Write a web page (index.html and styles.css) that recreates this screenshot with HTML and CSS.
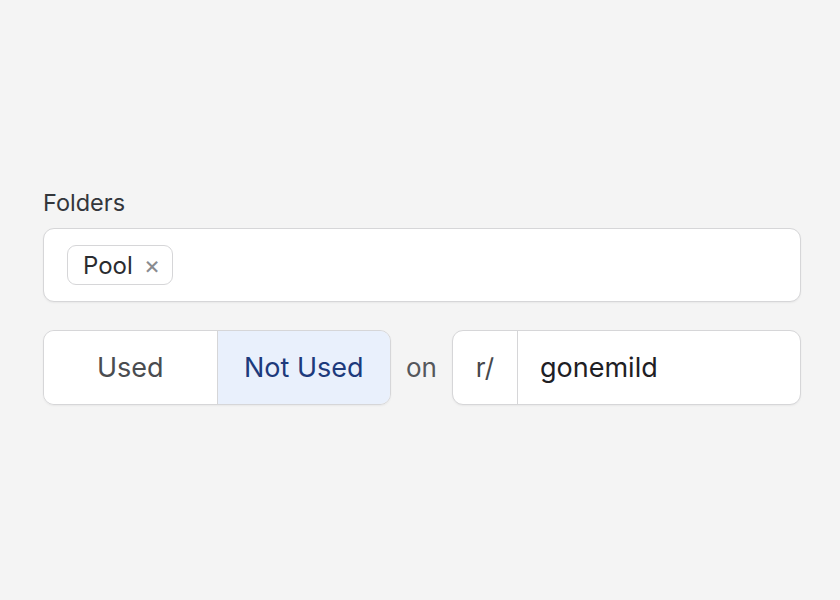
FILE: index.html
```html
<!DOCTYPE html>
<html lang="en">
<head>
<meta charset="utf-8">
<title>Folders</title>
<link rel="stylesheet" href="styles.css">
</head>
<body>
<main class="panel">
  <label class="label">Folders</label>
  <div class="tagbox">
    <span class="tag">Pool <span class="tag-x">×</span></span>
  </div>
  <div class="row">
    <div class="toggle">
      <button class="seg">Used</button>
      <button class="seg seg-active">Not Used</button>
    </div>
    <span class="on">on</span>
    <div class="field">
      <span class="prefix">r/</span>
      <span class="value">gonemild</span>
    </div>
  </div>
</main>
</body>
</html>
```
FILE: styles.css
```css
* { box-sizing: border-box; }
html, body { margin: 0; padding: 0; background: #f4f4f4; }
body {
  font-family: Inter, "Noto Sans", sans-serif;
  width: 840px;
  height: 600px;
}
.panel {
  width: 758px;
  margin-left: 43px;
  padding-top: 188px;
  display: flex;
  flex-direction: column;
}
.label {
  font-size: 23.5px;
  line-height: 30px;
  color: #33363b;
  margin-bottom: 10px;
}
.tagbox {
  height: 74px;
  background: #fff;
  border: 1.5px solid #d6d6d8;
  border-radius: 11px;
  box-shadow: 0 1px 2px rgba(0,0,0,0.05);
  display: flex;
  align-items: center;
  padding-left: 23px;
}
.tag {
  display: inline-flex;
  align-items: center;
  height: 40px;
  padding: 0 12px 0 15px;
  border: 1.5px solid #d6d6d8;
  border-radius: 9px;
  font-size: 24px;
  color: #2a2c30;
}
.tag-x {
  margin-left: 11px;
  color: #8a8c90;
  font-size: 25px;
  line-height: 1;
}
.row {
  margin-top: 28px;
  display: flex;
  align-items: center;
  height: 75px;
}
.toggle {
  display: flex;
  width: 348px;
  height: 75px;
  border: 1.5px solid #d6d6d8;
  border-radius: 11px;
  overflow: hidden;
  box-shadow: 0 1px 2px rgba(0,0,0,0.05);
}
.seg {
  flex: 1;
  border: 0;
  margin: 0;
  background: #fff;
  font-family: inherit;
  font-size: 27px;
  color: #4a4c50;
}
.seg-active {
  background: #e9f0fc;
  color: #1d3a7c;
  border-left: 1.5px solid #d6d6d8;
}
.on {
  width: 61px;
  text-align: center;
  font-size: 26px;
  color: #55575b;
}
.field {
  flex: 1;
  display: flex;
  height: 75px;
  background: #fff;
  border: 1.5px solid #d6d6d8;
  border-radius: 11px;
  box-shadow: 0 1px 2px rgba(0,0,0,0.05);
  overflow: hidden;
}
.prefix {
  width: 65px;
  display: flex;
  align-items: center;
  justify-content: center;
  font-size: 26px;
  color: #46484c;
  border-right: 1.5px solid #d6d6d8;
}
.value {
  display: flex;
  align-items: center;
  padding-left: 22px;
  font-size: 27px;
  color: #1e2024;
}
```
